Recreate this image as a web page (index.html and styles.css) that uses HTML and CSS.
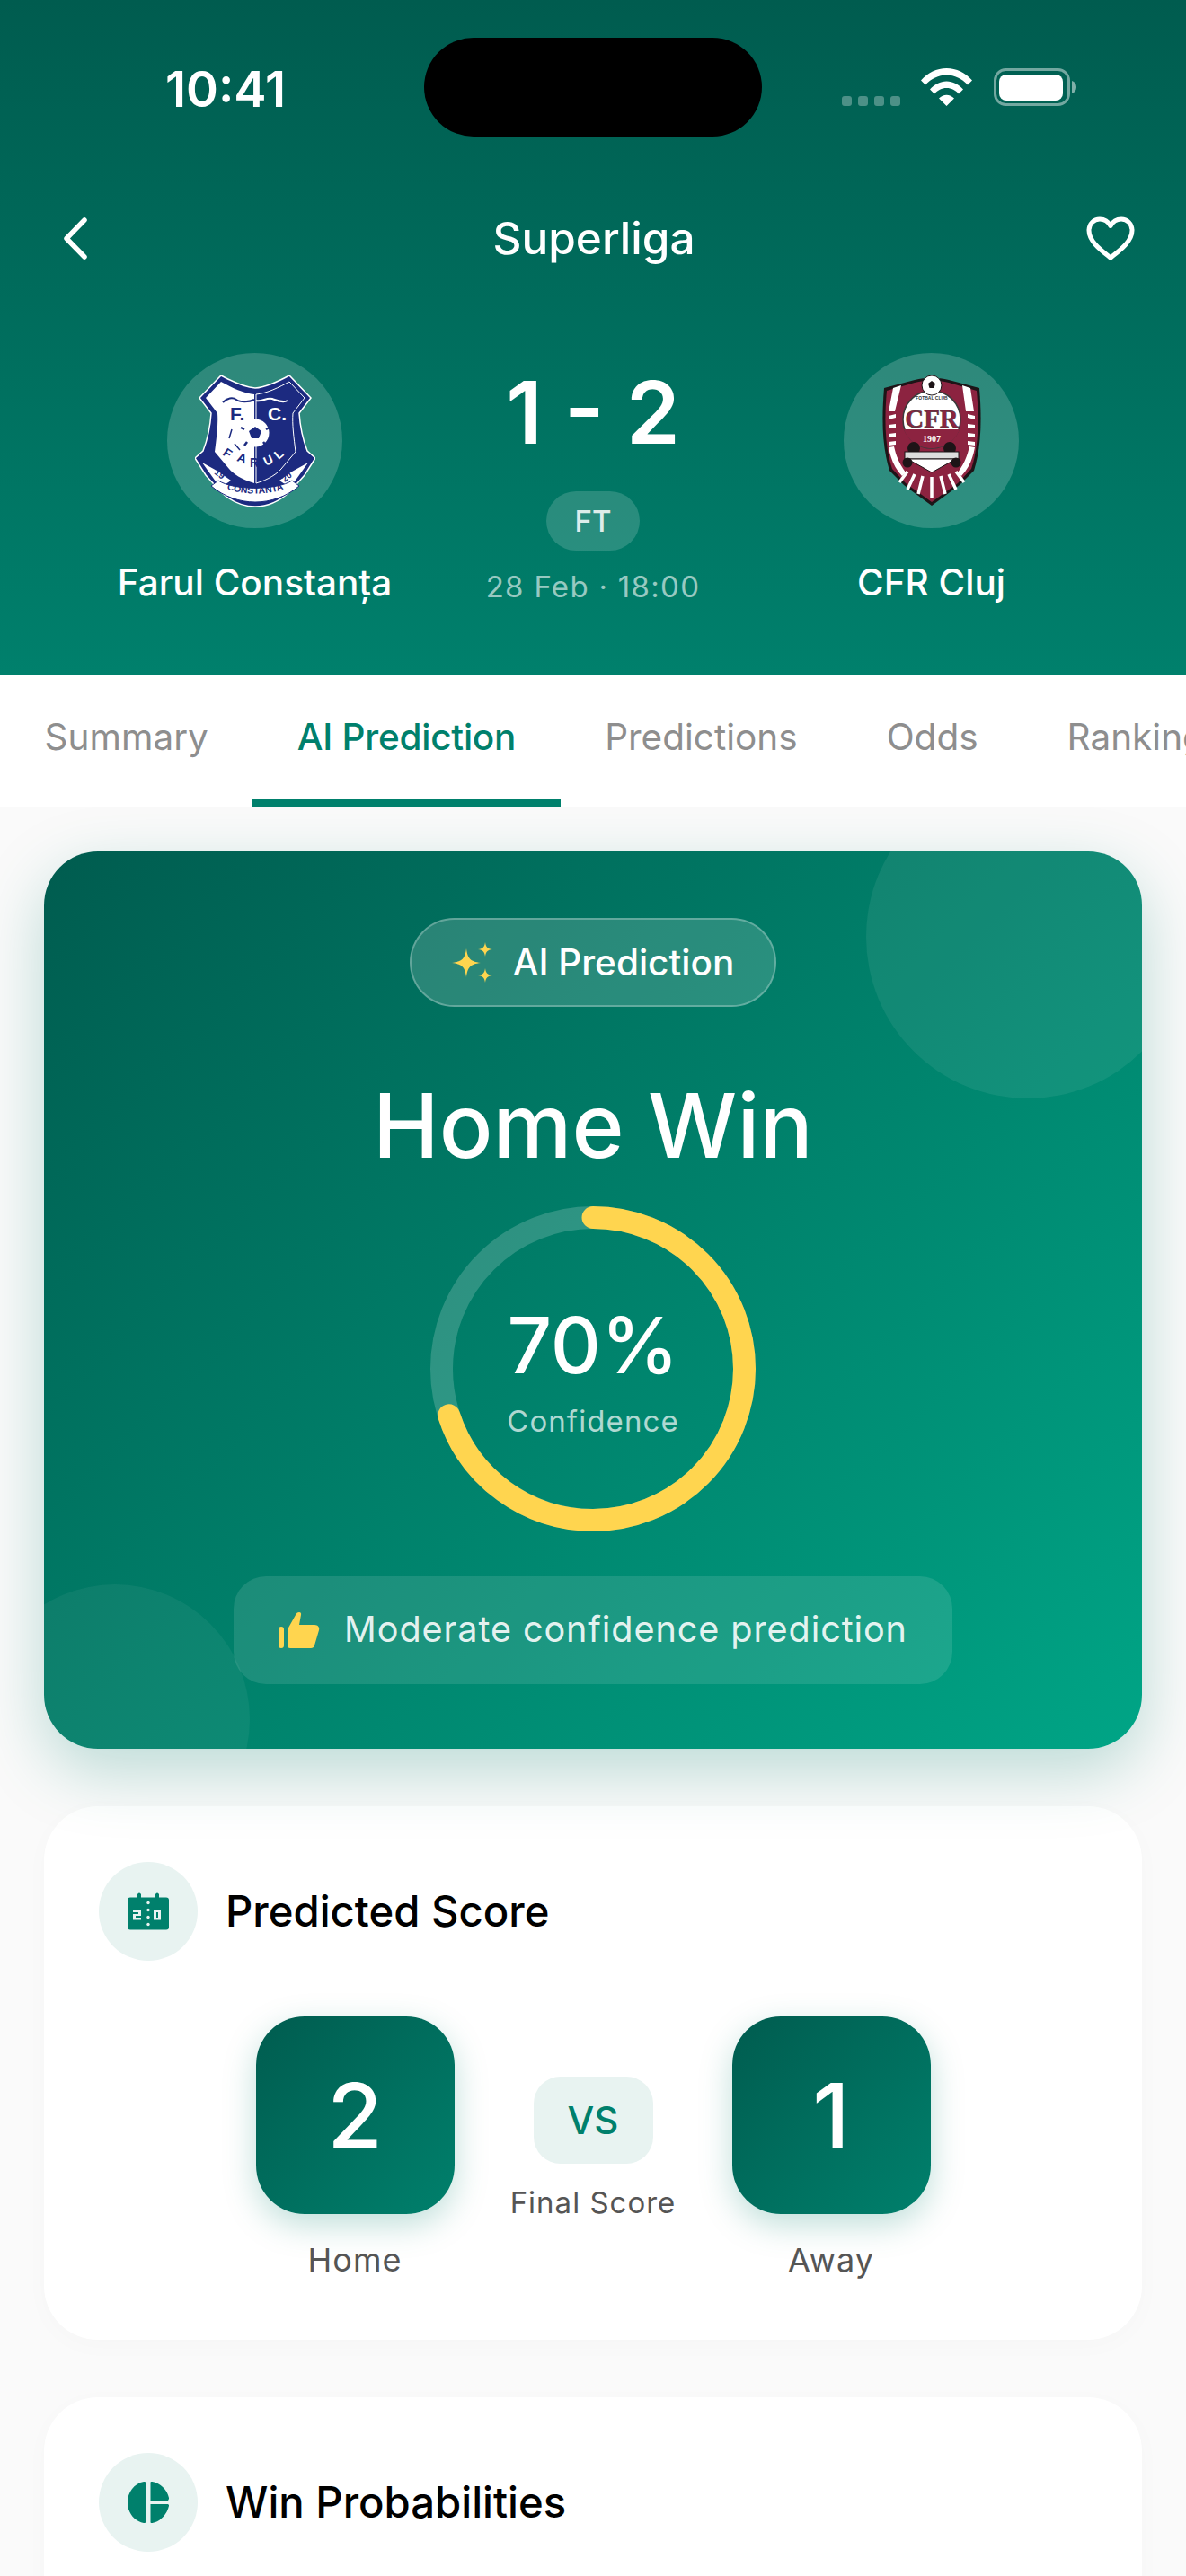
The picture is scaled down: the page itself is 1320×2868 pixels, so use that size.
FILE: index.html
```html
<!DOCTYPE html>
<html lang="en">
<head>
<meta charset="utf-8">
<title>Superliga</title>
<link rel="stylesheet" href="styles.css">
</head>
<body>
<div class="screen">
  <header class="match-header">
    <div class="status-bar">
      <span class="time">10:41</span>
      <div class="island"></div>
      <div class="status-icons">
        <div class="signal"><i></i><i></i><i></i><i></i></div>
        <svg class="wifi" viewBox="0 0 57 42"><path fill="#fff" d="M0 13.500C7.500 5 17.500 0 28.500 0S49.500 5 57 13.500L52 18.500C45.500 11.500 37.500 7.500 28.500 7.500S11.500 11.500 5 18.500ZM10 23.500C15 18 21.500 14.500 28.500 14.500S42 18 47 23.500L42 28.500C38.500 24.500 34 22 28.500 22S18.500 24.500 15 28.500ZM20 33.500C22.500 31.200 25.300 29.800 28.500 29.800S34.500 31.200 37 33.500L28.500 42Z"/></svg>
        <svg class="battery" viewBox="0 0 92 42"><rect x="1.500" y="1.500" width="82" height="39" rx="12" fill="none" stroke="#fff" stroke-opacity=".45" stroke-width="3"/><rect x="6" y="7" width="71" height="29" rx="8" fill="#fff"/><path d="M87 14c3 1 5 3.500 5 7s-2 6-5 7z" fill="#fff" fill-opacity=".5"/></svg>
      </div>
    </div>
    <div class="nav-row">
      <svg class="back" viewBox="0 0 27 47"><path d="M24 3 4 23.500 24 44" fill="none" stroke="#fff" stroke-width="5.500" stroke-linecap="round" stroke-linejoin="round"/></svg>
      <h1 class="league">Superliga</h1>
      <svg class="heart" viewBox="0 0 54 49"><path d="M27 46C17 38 3 28 3 15.500 3 8 8.500 3 15 3c5 0 9.500 2.700 12 7.500C29.500 5.700 34 3 39 3c6.500 0 12 5 12 12.500C51 28 37 38 27 46Z" fill="none" stroke="#fff" stroke-width="5" stroke-linejoin="round"/></svg>
    </div>
    <div class="match-row">
      <div class="team">
        <div class="crest">
          <svg class="logo farul" viewBox="0 0 134 148">
            <defs>
              <path id="cityArc" d="M25 122C44 136 90 136 109 122"/>
            </defs>
            <path d="M29 1C40 7 54 14 67 15 80 14 94 7 105 1L129 26 116 43C117 58 120 72 125 85L134 93 122 112 105 131C94 141 80 147 67 147S40 141 29 131L12 112 0 93 9 85C14 72 17 58 18 43L5 26Z" fill="#1c2a80" stroke="#fff" stroke-width="1.500"/>
            <path d="M29 8C40 14 54 21 66 22V121C52 117 42 110 38 105L22 86C24 70 26 55 25 43L12 26Z" fill="#fff"/>
            <path d="M105 8C94 14 80 21 68 22V121C82 117 92 110 96 105L112 86C110 70 108 55 109 43L122 26Z" fill="#1c2a80" stroke="#fff" stroke-width="1"/>
            <path d="M31 31C36 26 42 25 46 28S60 31 66 28" fill="none" stroke="#1c2a80" stroke-width="2"/>
            <path d="M68 29C74 31 80 25 86 27S98 32 103 29" fill="none" stroke="#fff" stroke-width="2"/>
            <text x="39" y="51" class="fc blue">F.</text>
            <text x="81" y="51" class="fc white">C.</text>
            <circle cx="67" cy="65" r="15.500" fill="#fff"/>
            <path d="M67 58l7 5-3 8h-8l-3-8Z" fill="#1c2a80"/>
            <path d="M55 61l-4-2M79 61l4-2M58 75l-3 4M76 75l3 4" stroke="#1c2a80" stroke-width="2.500"/>
            <path d="M41 61l-3 10M44 77l6 7" stroke="#1c2a80" stroke-width="1.500"/>
            <text x="30" y="89" class="fr blue" transform="rotate(35 30 89)">F</text>
            <text x="46" y="96" class="fr blue" transform="rotate(20 46 96)">A</text>
            <text x="61" y="103" class="fr blue">R</text>
            <text x="79" y="102" class="fr white" transform="rotate(-25 79 102)">U</text>
            <text x="93" y="95" class="fr white" transform="rotate(-40 93 95)">L</text>
            <path d="M8 98 26 108 40 118 28 126Z" fill="#fff"/>
            <path d="M126 98 108 108 94 118 106 126Z" fill="#fff"/>
            <text x="21" y="110" class="yr" transform="rotate(38 21 110)">19</text>
            <text x="100" y="120" class="yr" transform="rotate(-40 100 120)">20</text>
            <path d="M26 118C42 129 92 129 108 118L116 124C102 136 84 142 67 142S32 136 18 124Z" fill="#fff" stroke="#1c2a80" stroke-width="1"/>
            <text class="city"><textPath href="#cityArc" startOffset="50%" text-anchor="middle">CONSTANTA</textPath></text>
          </svg>
        </div>
        <span class="team-name">Farul Constanța</span>
      </div>
      <div class="score-block">
        <div class="score">1 - 2</div>
        <div class="ft">FT</div>
        <div class="date">28 Feb · 18:00</div>
      </div>
      <div class="team">
        <div class="crest">
          <svg class="logo cfr" viewBox="0 0 114 146">
            <path d="M4 14 38 5C50 2 64 2 76 5L110 14C113 50 112 80 104 106L88 122 57 145 26 122 10 106C2 80 1 50 4 14Z" fill="#1d1417"/>
            <path d="M7 17 38 8C50 5 64 5 76 8L107 17C110 50 109 80 101 104L86 120 57 141 28 120 13 104C5 80 4 50 7 17Z" fill="#8c2340"/>
            <path d="M14 14 23 11 16 40 9 40ZM100 14 91 11 95 40 104 40Z" fill="#fff"/>
            <path d="M9 40l8-2v4l-8 2ZM9 50l8-1v4l-8 1ZM9 60l8-1v4l-8 1ZM9 69l8-1v4l-8 1ZM105 40l-8-2v4l8 2ZM105 50l-8-1v4l8 1ZM105 60l-8-1v4l8 1ZM105 69l-8-1v4l8 1Z" fill="#fff" transform="translate(0 5)"/>
            <path d="M9 80l6-1C18 92 22 100 28 108L24 112C16 104 11 92 9 80ZM105 80l-6-1C96 92 92 100 86 108L90 112C98 104 103 92 105 80Z" fill="#fff"/>
            <circle cx="57" cy="49" r="32" fill="#fff" stroke="#3a3a3a" stroke-width="1.500"/>
            <path d="M26 60H88C84 72 72 81 57 81S30 72 26 60Z" fill="#8c2340"/>
            <text x="57" y="58" class="cfr-name" text-anchor="middle">CFR</text>
            <text x="57" y="74" class="cfr-year" text-anchor="middle">1907</text>
            <text x="57" y="27" class="cfr-top" text-anchor="middle">FOTBAL CLUB</text>
            <circle cx="57" cy="11" r="11" fill="#fff" stroke="#1d1417"/>
            <path d="M57 6l4 3-1.500 5h-5L53 9Z" fill="#1d1417"/>
            <circle cx="37" cy="81" r="7" fill="#1d1417"/>
            <circle cx="77" cy="81" r="7" fill="#1d1417"/>
            <rect x="27" y="85" width="60" height="8" fill="#ddd" stroke="#1d1417"/>
            <path d="M30 93H84L57 108Z" fill="#fff" stroke="#1d1417"/>
            <circle cx="30" cy="97" r="5.500" fill="#1d1417"/>
            <circle cx="84" cy="97" r="5.500" fill="#1d1417"/>
            <path d="M30 107l-9 12M38 110l-8 17M47 112l-5 20M57 113V137M67 112l5 20M76 110l8 17M84 107l9 12" stroke="#fff" stroke-width="3.500"/>
          </svg>
        </div>
        <span class="team-name">CFR Cluj</span>
      </div>
    </div>
  </header>

  <nav class="tabs">
    <a class="tab">Summary</a>
    <a class="tab active">AI Prediction</a>
    <a class="tab">Predictions</a>
    <a class="tab">Odds</a>
    <a class="tab">Rankings</a>
  </nav>

  <main class="content">
    <section class="hero">
      <div class="blob blob-top"></div>
      <div class="blob blob-bottom"></div>
      <div class="ai-pill">
        <svg class="sparkle" viewBox="0 0 45 45"><path fill="#ffd54f" d="M16 7c1.500 11 4 14.500 16 16-12 1.500-14.500 5-16 16C14.500 28 12 24.500 0 23c12-1.500 14.500-5 16-16ZM37 0c.8 5.500 2.500 7.200 8 8-5.500.8-7.200 2.500-8 8-.8-5.500-2.500-7.200-8-8 5.500-.8 7.200-2.500 8-8ZM37 29c.8 5.500 2.500 7.200 8 8-5.500.8-7.200 2.500-8 8-.8-5.500-2.500-7.200-8-8 5.500-.8 7.200-2.500 8-8Z"/></svg>
        <span>AI Prediction</span>
      </div>
      <h2 class="verdict">Home Win</h2>
      <div class="ring">
        <svg class="ring-svg" viewBox="0 0 362 362">
          <circle cx="181" cy="181" r="168.500" fill="none" stroke="#fff" stroke-opacity=".18" stroke-width="25"/>
          <circle cx="181" cy="181" r="168.500" fill="none" stroke="#ffd54f" stroke-width="25" stroke-linecap="round" stroke-dasharray="741 1059" transform="rotate(-90 181 181)"/>
        </svg>
        <div class="ring-text">
          <span class="pct">70%</span>
          <span class="conf">Confidence</span>
        </div>
      </div>
      <div class="note">
        <svg class="thumb" viewBox="0 0 46 40"><path fill="#ffd54f" d="M0 19c0-2 1-3 3-3s3 1 3 3v18c0 2-1 3-3 3s-3-1-3-3ZM10 19 19 3c1-2 2-3 4-3 1.500 0 2.500 1 2 3l-2 11h17c4 0 6 3 5 6l-5 17c-.5 2-2 3-4 3H13c-2 0-3-1-3-3Z"/></svg>
        <span>Moderate confidence prediction</span>
      </div>
    </section>

    <section class="card">
      <div class="card-head">
        <div class="icon-disc">
          <svg class="disc-icon" viewBox="0 0 46 41"><path fill="#00806c" d="M13 0c1 0 2 1 2 2v3h16V2c0-1 1-2 2-2s2 1 2 2v3h8c2 0 3 1 3 3v30c0 2-1 3-3 3H3c-2 0-3-1-3-3V8c0-2 1-3 3-3h8V2c0-1 1-2 2-2Z"/><g fill="#e8f3f1"><circle cx="23" cy="11" r="1.700"/><circle cx="23" cy="19" r="1.700"/><circle cx="23" cy="27" r="1.700"/><circle cx="23" cy="35" r="1.700"/><path d="M6 19h9v6.500H9v2h6V30H6v-6.500h6v-2H6ZM29 19h8v11h-8Zm3 2.500v6h2v-6Z"/></g></svg>
        </div>
        <h3 class="card-title">Predicted Score</h3>
      </div>
      <div class="score-row">
        <div class="score-col">
          <div class="score-box">2</div>
          <span class="score-label">Home</span>
        </div>
        <div class="vs-col">
          <div class="vs">VS</div>
          <span class="score-label small">Final Score</span>
        </div>
        <div class="score-col">
          <div class="score-box">1</div>
          <span class="score-label">Away</span>
        </div>
      </div>
    </section>

    <section class="card card-cut">
      <div class="card-head">
        <div class="icon-disc">
          <svg class="disc-icon" viewBox="0 0 46 46"><path fill="#00806c" d="M20 1v44c0 1-1 1.500-2 1C7 44 0 34 0 23S7 2 18 0c1-.2 2 0 2 1ZM25.500 1c0-1 1-1.200 2-1 9 1.500 16.500 9 18.500 18 .2 1-.5 3-1.500 3.500h-19ZM25.500 25h19c1 0 1.700 1 1.500 2-2 9-9.500 17.500-18.500 19-1 .2-2 0-2-1Z"/></svg>
        </div>
        <h3 class="card-title">Win Probabilities</h3>
      </div>
    </section>
  </main>
</div>
</body>
</html>
```

FILE: styles.css
```css
* { box-sizing: border-box; margin: 0; padding: 0; }
html, body { width: 1320px; height: 2868px; overflow: hidden; background: #fafafa; }
body { font-family: Inter, "Liberation Sans", sans-serif; color: #000; }
.screen { width: 1320px; height: 2868px; overflow: hidden; display: flex; flex-direction: column; }

.match-header { height: 751px; flex: none; background: linear-gradient(180deg, #005c4f 0%, #00806c 100%); color: #fff; padding-top: 42px; }
.status-bar { height: 110px; position: relative; display: flex; align-items: center; justify-content: space-between; padding: 0 122px 0 184px; }
.time { font-size: 54.500px; font-weight: 600; line-height: 62px; margin-top: 4px; }
.island { position: absolute; left: 472px; top: 0; width: 376px; height: 110px; border-radius: 55px; background: #000; }
.status-icons { display: flex; align-items: flex-end; }
.signal { display: flex; gap: 7px; margin-right: 23px; }
.signal i { display: block; width: 11px; height: 11px; border-radius: 3px; background: rgba(255,255,255,.3); }
.wifi { width: 57px; height: 42px; margin-right: 24px; }
.battery { width: 92px; height: 42px; }

.nav-row { display: flex; align-items: center; justify-content: space-between; padding: 0 57px 0 70px; margin-top: 85px; height: 56px; }
.back { width: 27px; height: 47px; }
.heart { width: 54px; height: 49px; }
.league { font-size: 49.500px; font-weight: 500; line-height: 56px; margin-left: 16px; }

.match-row { display: grid; grid-template-columns: 567px 186px 567px; margin-top: 100px; }
.team { display: flex; flex-direction: column; align-items: center; }
.crest { width: 195px; height: 195px; border-radius: 50%; background: rgba(255,255,255,.18); display: flex; align-items: center; justify-content: center; }
.logo { display: block; }
.farul { width: 134px; height: 148px; }
.cfr { width: 114px; height: 146px; }
.team-name { font-size: 40.500px; font-weight: 500; line-height: 50px; margin-top: 36px; white-space: nowrap; }
.score-block { display: flex; flex-direction: column; align-items: center; white-space: nowrap; }
.score { font-size: 96px; font-weight: 600; line-height: 116px; margin-top: 8px; }
.ft { width: 104px; height: 66px; border-radius: 33px; background: rgba(255,255,255,.16); font-size: 33px; font-weight: 500; color: rgba(255,255,255,.85); display: flex; align-items: center; justify-content: center; margin-top: 30px; }
.date { font-size: 33px; line-height: 40px; margin-top: 20px; color: rgba(255,255,255,.6); letter-spacing: 1.300px; }

.tabs { height: 147px; flex: none; background: #fff; display: flex; overflow: hidden; position: relative; z-index: 1; white-space: nowrap; }
.tab { flex: none; padding: 0 49.500px; font-size: 40.500px; font-weight: 400; line-height: 140px; color: #8e8e8e; height: 147px; }
.tab.active { color: #00806c; font-weight: 500; letter-spacing: -.25px; border-bottom: 8px solid #00806c; }

.content { padding: 50px 49px 0; display: flex; flex-direction: column; gap: 64px; }
.hero { position: relative; overflow: hidden; height: 999px; flex: none; border-radius: 60px; background: linear-gradient(135deg, #005c4f 0%, #00a586 100%); display: flex; flex-direction: column; align-items: center; padding-top: 74px; color: #fff; box-shadow: 0 24px 72px rgba(0,128,108,.26); }
.blob { position: absolute; border-radius: 50%; background: rgba(255,255,255,.07); }
.blob-top { width: 360px; height: 360px; top: -85px; right: -53px; }
.blob-bottom { width: 300px; height: 300px; bottom: -117px; left: -71px; background: rgba(255,255,255,.05); }
.ai-pill { position: relative; width: 408px; height: 99px; border-radius: 50px; background: rgba(255,255,255,.16); border: 2px solid rgba(255,255,255,.27); display: flex; align-items: center; justify-content: center; gap: 23px; font-size: 40.500px; font-weight: 500; }
.sparkle { width: 45px; height: 45px; }
.verdict { position: relative; font-size: 99px; font-weight: 550; line-height: 128px; margin-top: 68px; }
.ring { position: relative; width: 362px; height: 362px; margin-top: 26px; }
.ring-svg { width: 362px; height: 362px; display: block; }
.ring-text { position: absolute; inset: 0; display: flex; flex-direction: column; align-items: center; justify-content: center; }
.pct { font-size: 87px; font-weight: 500; line-height: 104px; margin-top: 0; }
.conf { font-size: 33px; line-height: 40px; margin-top: 12px; color: rgba(255,255,255,.7); letter-spacing: 1.100px; }
.note { position: relative; width: 800px; height: 120px; margin-top: 50px; border-radius: 36px; background: rgba(255,255,255,.11); display: flex; align-items: center; justify-content: center; gap: 27px; font-size: 39.600px; color: rgba(255,255,255,.9); letter-spacing: .9px; }
.note span { margin-top: -2px; }
.thumb { width: 46px; height: 40px; }

.card { background: #fff; border-radius: 60px; padding: 62px 61px 67px; box-shadow: 0 6px 30px rgba(0,0,0,.02); flex: none; }
.card-head { display: flex; align-items: center; gap: 31px; }
.icon-disc { width: 110px; height: 110px; border-radius: 50%; background: #e8f3f1; display: flex; align-items: center; justify-content: center; }
.disc-icon { width: 46px; height: 46px; }
.card-title { font-size: 47.250px; font-weight: 500; line-height: 60px; }
.score-row { display: flex; justify-content: center; align-items: flex-start; margin-top: 62px; }
.score-col { width: 221px; display: flex; flex-direction: column; align-items: center; }
.score-box { width: 221px; height: 220px; border-radius: 54px; background: linear-gradient(135deg, #005c4f, #00806c); color: #fff; font-size: 100px; font-weight: 550; display: flex; align-items: center; justify-content: center; box-shadow: 0 12px 36px rgba(0,128,108,.25); }
.score-label { font-size: 36px; line-height: 44px; color: #555; letter-spacing: 1px; white-space: nowrap; }
.score-label.small { font-size: 33px; }
.score-col .score-label { margin-top: 29px; }
.vs-col { width: 309px; display: flex; flex-direction: column; align-items: center; padding-top: 67px; }
.vs { width: 133px; height: 97px; border-radius: 30px; background: #e8f3f1; color: #00806c; font-size: 42px; font-weight: 500; display: flex; align-items: center; justify-content: center; margin-bottom: 21px; }
.card-cut { height: 260px; }
.fc { font: 700 21px "Liberation Sans", sans-serif; }
.fr { font: 700 14px "Liberation Sans", sans-serif; }
.blue { fill: #1c2a80; }
.white { fill: #fff; }
.yr { font: 700 10px "Liberation Sans", sans-serif; fill: #1c2a80; }
.city { font: 700 10.500px "Liberation Sans", sans-serif; fill: #1c2a80; }
.cfr-name { font: 700 29px "Liberation Serif", serif; fill: #8c2340; stroke: #333; stroke-width: .5px; }
.cfr-year { font: 700 10px "Liberation Serif", serif; fill: #fff; }
.cfr-top { font: 700 5px "Liberation Sans", sans-serif; fill: #333; }
```
